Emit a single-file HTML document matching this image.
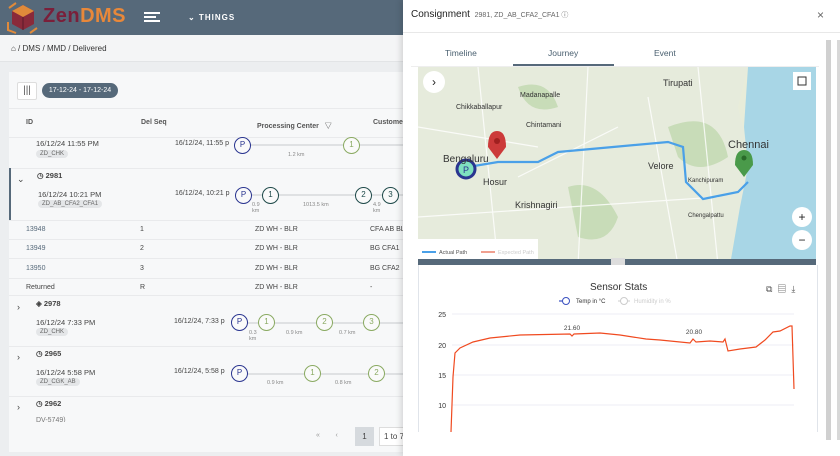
<!DOCTYPE html>
<html><head><meta charset="utf-8"><style>
*{box-sizing:border-box;margin:0;padding:0}
body{width:840px;height:456px;overflow:hidden;font-family:"Liberation Sans","Noto Sans CJK SC",sans-serif;background:#eceef0;position:relative;font-size:7px;color:#444}
.abs{position:absolute}
.hdr{left:0;top:0;width:403px;height:35px;background:#56697a}
.bc{left:0;top:35px;width:403px;height:27px;background:#f4f5f6;border-bottom:1px solid #e2e4e6}
.card{left:9px;top:72px;width:394px;height:380px;background:#f7f8f9}
.t{position:absolute;white-space:nowrap}
.tag{position:absolute;background:#e4e6e8;border-radius:4px;font-size:6px;padding:1px 4px;color:#666}
.c{position:absolute;width:17px;height:17px;border-radius:50%;border:1.5px solid;background:#fafafa;font-size:8px;text-align:center;line-height:14px}
.P{border-color:#2a3590;color:#2a3590}
.G{border-color:#8aaa62;color:#8aaa62}
.D{border-color:#1f4a4a;color:#1f4a4a}
.ln{position:absolute;height:2px;background:#dfe1e3}
.rl{position:absolute;left:9px;width:394px;height:1px;background:#e9eaec}
.panel{left:403px;top:0;width:437px;height:456px;background:#fff;box-shadow:-2px 0 6px rgba(0,0,0,.15)}
</style></head><body>
<div class="abs hdr">
 <svg class="abs" style="left:6px;top:2px" width="34" height="32" viewBox="0 0 34 32"><path d="M17 3 L28 9 L28 22 L17 28 L6 22 L6 9Z" fill="#8a2a3a"/><path d="M6 9 L17 15 L28 9 L17 3Z" fill="#e08a3a"/><path d="M17 15 L17 28" stroke="#5a1a2a"/><path d="M3 6 L10 1 M31 26 L24 31 M2 20 L2 28 L10 31" stroke="#e08a3a" stroke-width="2" fill="none"/></svg>
 <div class="t" style="left:43px;top:5px;font-size:20px;font-weight:bold;letter-spacing:0.5px"><span style="color:#7a1f3a">Zen</span><span style="color:#e8883a">DMS</span></div>
 <div class="abs" style="left:144px;top:12px;width:16px;height:2px;background:#fff"></div>
 <div class="abs" style="left:144px;top:16px;width:12px;height:2px;background:#fff"></div>
 <div class="abs" style="left:144px;top:20px;width:16px;height:2px;background:#fff"></div>
 <div class="t" style="left:188px;top:13px;color:#fff;font-size:8px;font-weight:bold;letter-spacing:1px">⌄ THINGS</div>
</div>
<div class="abs bc"><div class="t" style="left:11px;top:9px;font-size:8px;color:#333">⌂ / DMS / MMD / Delivered</div></div>
<div class="abs card"></div>
<div class="abs" style="left:17px;top:82px;width:20px;height:18px;border:1px solid #ddd;background:#fff;border-radius:2px;font-size:10px;text-align:center;color:#555;line-height:16px">|||</div>
<div class="abs" style="left:42px;top:83px;width:76px;height:15px;border-radius:8px;background:#56697a;color:#fff;font-size:7px;line-height:15px;text-align:center">17-12-24 - 17-12-24</div>
<div class="rl" style="top:108px"></div>
<div class="t" style="left:26px;top:119px;font-size:7px;font-weight:bold;color:#555">ID</div>
<div class="t" style="left:141px;top:119px;font-size:7px;font-weight:bold;color:#555">Del Seq</div>
<div class="t" style="left:257px;top:121px;font-size:7px;font-weight:bold;color:#555">Processing Center &nbsp;&nbsp;▽</div>
<div class="t" style="left:373px;top:119px;font-size:7px;font-weight:bold;color:#555">Customer</div>
<div class="rl" style="top:137px"></div>
<!-- row 1 -->
<div class="t" style="left:36px;top:139px;font-size:7.5px">16/12/24 11:55 PM</div>
<div class="tag" style="left:36px;top:150px">ZD_CHK</div>
<div class="t" style="left:175px;top:140px">16/12/24, 11:55 p</div>
<div class="ln" style="left:245px;top:144px;width:158px"></div>
<div class="c P" style="left:234px;top:137px">P</div>
<div class="c G" style="left:343px;top:137px">1</div>
<div class="t" style="left:288px;top:152px;font-size:5.5px;color:#888">1.2 km</div>
<div class="rl" style="top:168px"></div>
<!-- 2981 -->
<div class="abs" style="left:9px;top:168px;width:2px;height:52px;background:#56697a"></div>
<div class="t" style="left:17px;top:174px;font-size:9px">⌄</div>
<div class="t" style="left:37px;top:171px;font-size:7.5px;font-weight:bold">◷ 2981</div>
<div class="t" style="left:38px;top:190px;font-size:7.5px">16/12/24 10:21 PM</div>
<div class="tag" style="left:38px;top:200px">ZD_AB_CFA2_CFA1</div>
<div class="t" style="left:175px;top:190px">16/12/24, 10:21 p</div>
<div class="ln" style="left:245px;top:194px;width:158px"></div>
<div class="c P" style="left:235px;top:187px">P</div>
<div class="c D" style="left:262px;top:187px">1</div>
<div class="c D" style="left:355px;top:187px">2</div>
<div class="c D" style="left:382px;top:187px">3</div>
<div class="t" style="left:252px;top:202px;font-size:5.5px;color:#888">0.9<br>km</div>
<div class="t" style="left:303px;top:202px;font-size:5.5px;color:#888">1013.5 km</div>
<div class="t" style="left:373px;top:202px;font-size:5.5px;color:#888">4.9<br>km</div>
<div class="rl" style="top:220px"></div>
<div class="t" style="left:26px;top:226px;color:#56697a">13948</div><div class="t" style="left:140px;top:226px">1</div><div class="t" style="left:255px;top:226px">ZD WH - BLR</div><div class="t" style="left:370px;top:226px">CFA AB BL</div>
<div class="rl" style="top:239px"></div>
<div class="t" style="left:26px;top:245px;color:#56697a">13949</div><div class="t" style="left:140px;top:245px">2</div><div class="t" style="left:255px;top:245px">ZD WH - BLR</div><div class="t" style="left:370px;top:245px">BG CFA1</div>
<div class="rl" style="top:258px"></div>
<div class="t" style="left:26px;top:265px;color:#56697a">13950</div><div class="t" style="left:140px;top:265px">3</div><div class="t" style="left:255px;top:265px">ZD WH - BLR</div><div class="t" style="left:370px;top:265px">BG CFA2</div>
<div class="rl" style="top:278px"></div>
<div class="t" style="left:26px;top:284px">Returned</div><div class="t" style="left:140px;top:284px">R</div><div class="t" style="left:255px;top:284px">ZD WH - BLR</div><div class="t" style="left:370px;top:284px">-</div>
<div class="rl" style="top:295px"></div>
<!-- 2978 -->
<div class="t" style="left:17px;top:302px;font-size:9px">›</div>
<div class="t" style="left:36px;top:299px;font-size:7.5px;font-weight:bold">◈ 2978</div>
<div class="t" style="left:36px;top:318px;font-size:7.5px">16/12/24 7:33 PM</div>
<div class="tag" style="left:36px;top:328px">ZD_CHK</div>
<div class="t" style="left:174px;top:318px">16/12/24, 7:33 p</div>
<div class="ln" style="left:240px;top:322px;width:163px"></div>
<div class="c P" style="left:231px;top:314px">P</div>
<div class="c G" style="left:258px;top:314px">1</div>
<div class="c G" style="left:316px;top:314px">2</div>
<div class="c G" style="left:363px;top:314px">3</div>
<div class="t" style="left:249px;top:330px;font-size:5.5px;color:#888">0.3<br>km</div>
<div class="t" style="left:286px;top:330px;font-size:5.5px;color:#888">0.9 km</div>
<div class="t" style="left:339px;top:330px;font-size:5.5px;color:#888">0.7 km</div>
<div class="rl" style="top:346px"></div>
<!-- 2965 -->
<div class="t" style="left:17px;top:352px;font-size:9px">›</div>
<div class="t" style="left:36px;top:349px;font-size:7.5px;font-weight:bold">◷ 2965</div>
<div class="t" style="left:36px;top:368px;font-size:7.5px">16/12/24 5:58 PM</div>
<div class="tag" style="left:36px;top:378px">ZD_CGK_AB</div>
<div class="t" style="left:174px;top:368px">16/12/24, 5:58 p</div>
<div class="ln" style="left:240px;top:373px;width:163px"></div>
<div class="c P" style="left:231px;top:365px">P</div>
<div class="c G" style="left:304px;top:365px">1</div>
<div class="c G" style="left:368px;top:365px">2</div>
<div class="t" style="left:267px;top:380px;font-size:5.5px;color:#888">0.9 km</div>
<div class="t" style="left:335px;top:380px;font-size:5.5px;color:#888">0.8 km</div>
<div class="rl" style="top:396px"></div>
<div class="t" style="left:17px;top:402px;font-size:9px">›</div>
<div class="t" style="left:36px;top:399px;font-size:7.5px;font-weight:bold">◷ 2962</div>
<div class="t" style="left:36px;top:417px;font-size:7px;color:#777">DV-5749)</div>
<div class="abs" style="left:9px;top:422px;width:394px;height:30px;background:#f7f8f9"></div>
<div class="t" style="left:316px;top:432px;color:#999">«&nbsp;&nbsp;&nbsp;&nbsp;&nbsp;&nbsp;&nbsp;&nbsp;‹</div>
<div class="abs" style="left:355px;top:427px;width:19px;height:19px;background:#d6dade;text-align:center;line-height:19px;font-size:8px">1</div>
<div class="abs" style="left:379px;top:427px;width:30px;height:19px;border:1px solid #ddd;background:#fff;font-size:8px;line-height:17px;padding-left:4px">1 to 7</div>

<!-- right panel -->
<div class="abs panel">
 <div class="t" style="left:8px;top:9px;font-size:10px;color:#222">Consignment <span style="font-size:7px;color:#666">&nbsp;2981, ZD_AB_CFA2_CFA1 ⓘ</span></div>
 <div class="t" style="left:414px;top:8px;font-size:12px;color:#666">×</div>
 <div class="abs" style="left:0;top:32px;width:437px;height:1px;background:#e8e8e8"></div>
 <div class="t" style="left:42px;top:48px;font-size:8.5px;color:#4a6070">Timeline</div>
 <div class="t" style="left:145px;top:48px;font-size:8.5px;color:#4a6070">Journey</div>
 <div class="t" style="left:251px;top:48px;font-size:8.5px;color:#4a6070">Event</div>
 <div class="abs" style="left:110px;top:64px;width:101px;height:2px;background:#56697a"></div>
 <div class="abs" style="left:8px;top:66px;width:408px;height:1px;background:#eee"></div>
 <div class="abs" style="left:423px;top:40px;width:5px;height:400px;background:#d0d0d0"></div>
 <div class="abs" style="left:434px;top:40px;width:3px;height:400px;background:#d8d8d8"></div>
</div>
<svg class="abs" style="left:418px;top:67px" width="398" height="198" viewBox="0 0 398 198">
 <rect width="398" height="198" fill="#e8ecd9"/>
 <path d="M0 0 H330 L320 40 L330 80 L325 130 L310 198 H0Z" fill="#e6ebdc"/>
 <path d="M150 120 Q180 110 200 150 Q190 180 160 170Z M250 60 Q300 40 310 90 Q280 110 260 90Z M100 20 Q130 10 140 40 Q110 50 100 20Z" fill="#c8dcb8"/>
 <path d="M330 0 H398 V198 H312 L322 140 L330 100 L326 60Z" fill="#a8d6e6"/>
 <path d="M0 60 L120 80 M60 0 L80 198 M100 110 L200 60 M170 0 L160 198 M230 30 L260 198 M0 150 L300 130 M280 0 L300 198" stroke="#fff" stroke-width="1.2" fill="none" opacity=".8"/>
 <path d="M50 100 L80 95 L120 95 L140 85 L195 80 L250 75 L265 80 L268 115 L285 132 L320 125 L330 115" stroke="#4aa0e8" stroke-width="2.2" fill="none"/>
 <path d="M70 80 Q70 64 79 64 Q88 64 88 80 L79 92Z" fill="#cc3a3a"/><circle cx="79" cy="74" r="3" fill="#a02020"/>
 <path d="M317 98 Q317 83 326 83 Q335 83 335 98 L326 110Z" fill="#4a9a4a"/><circle cx="326" cy="91" r="2.5" fill="#2a6a2a"/>
 <circle cx="48" cy="102" r="9" fill="#7fe0c0" stroke="#2a3590" stroke-width="3"/><text x="48" y="106" font-size="9" text-anchor="middle" fill="#2a3590" font-family="Liberation Sans">P</text>
 <g font-family="Liberation Sans" fill="#333"><text x="25" y="95" font-size="10">Bengaluru</text><text x="65" y="118" font-size="9">Hosur</text><text x="97" y="141" font-size="9">Krishnagiri</text><text x="230" y="102" font-size="9">Velore</text><text x="310" y="81" font-size="11">Chennai</text><text x="102" y="30" font-size="7">Madanapalle</text><text x="245" y="19" font-size="9">Tirupati</text><text x="38" y="42" font-size="7">Chikkaballapur</text><text x="108" y="60" font-size="7">Chintamani</text><text x="270" y="115" font-size="6">Kanchipuram</text><text x="180" y="205" font-size="6">Tiruvannamalai</text><text x="270" y="150" font-size="6">Chengalpattu</text></g>
 <circle cx="16" cy="15" r="11" fill="#fff"/><text x="16" y="19" font-size="12" text-anchor="middle" fill="#222" font-family="Liberation Sans">›</text>
 <rect x="375" y="5" width="18" height="18" fill="#fff"/><rect x="380" y="10" width="8" height="8" fill="none" stroke="#333"/>
 <circle cx="384" cy="150" r="10" fill="#fff"/><text x="384" y="154" font-size="12" text-anchor="middle" font-family="Liberation Sans" fill="#222">+</text>
 <circle cx="384" cy="173" r="10" fill="#fff"/><text x="384" y="177" font-size="12" text-anchor="middle" font-family="Liberation Sans" fill="#222">−</text>
 <rect x="0" y="172" width="120" height="20" fill="#fff"/>
 <line x1="4" y1="185" x2="18" y2="185" stroke="#4aa0e8" stroke-width="2"/><text x="21" y="187" font-size="5.5" fill="#555" font-family="Liberation Sans">Actual Path</text>
 <line x1="63" y1="185" x2="77" y2="185" stroke="#f0a090" stroke-width="2"/><text x="80" y="187" font-size="5.5" fill="#ccc" font-family="Liberation Sans">Expected Path</text>
 <rect x="0" y="192" width="398" height="6" fill="#56697a"/><rect x="193" y="191" width="14" height="7" fill="#ddd"/>
</svg>
<div class="abs" style="left:418px;top:265px;width:400px;height:167px;border-left:1px solid #e0e4ea;border-right:1px solid #e0e4ea;background:#fff"></div>
<div class="t" style="left:590px;top:282px;font-size:10px;color:#333">Sensor Stats</div>
<div class="t" style="left:766px;top:282px;font-size:9px;color:#555">⧉ &nbsp;▤ &nbsp;⤓</div>
<svg class="abs" style="left:418px;top:290px" width="400" height="142" viewBox="418 290 400 142">
 <line x1="559" y1="301" x2="569" y2="301" stroke="#3a50c0" stroke-width="1.2"/><circle cx="566" cy="301" r="3.5" fill="#fff" stroke="#3a50c0"/>
 <text x="576" y="303" font-size="6" fill="#333" font-family="Liberation Sans">Temp in °C</text>
 <line x1="618" y1="301" x2="630" y2="301" stroke="#ccc"/><circle cx="624" cy="301" r="3.5" fill="#fff" stroke="#ccc"/>
 <text x="634" y="303" font-size="6" fill="#ccc" font-family="Liberation Sans">Humidity in %</text>
 <g stroke="#eceef4" stroke-width="1"><line x1="452" y1="314" x2="794" y2="314"/><line x1="452" y1="345" x2="794" y2="345"/><line x1="452" y1="375" x2="794" y2="375"/><line x1="452" y1="405" x2="794" y2="405"/></g>
 <g font-size="7" fill="#333" font-family="Liberation Sans" text-anchor="end"><text x="446" y="317">25</text><text x="446" y="348">20</text><text x="446" y="378">15</text><text x="446" y="408">10</text></g>
 <text x="572" y="330" font-size="6.5" fill="#444" font-family="Liberation Sans" text-anchor="middle">21.60</text>
 <text x="694" y="334" font-size="6.5" fill="#444" font-family="Liberation Sans" text-anchor="middle">20.80</text>
 <polyline fill="none" stroke="#f04a20" stroke-width="1.2" points="451,432 453,377 455,353 460,348 473,342 490,338 520,335 570,334 572,336 574,334 600,333 620,335 646,339 660,340 690,343 693,339 696,342 710,341 723,342 725,339 728,351 740,349 756,347 765,340 773,332 780,331 790,326 792,326 794,389"/>
</svg>
</body></html>
